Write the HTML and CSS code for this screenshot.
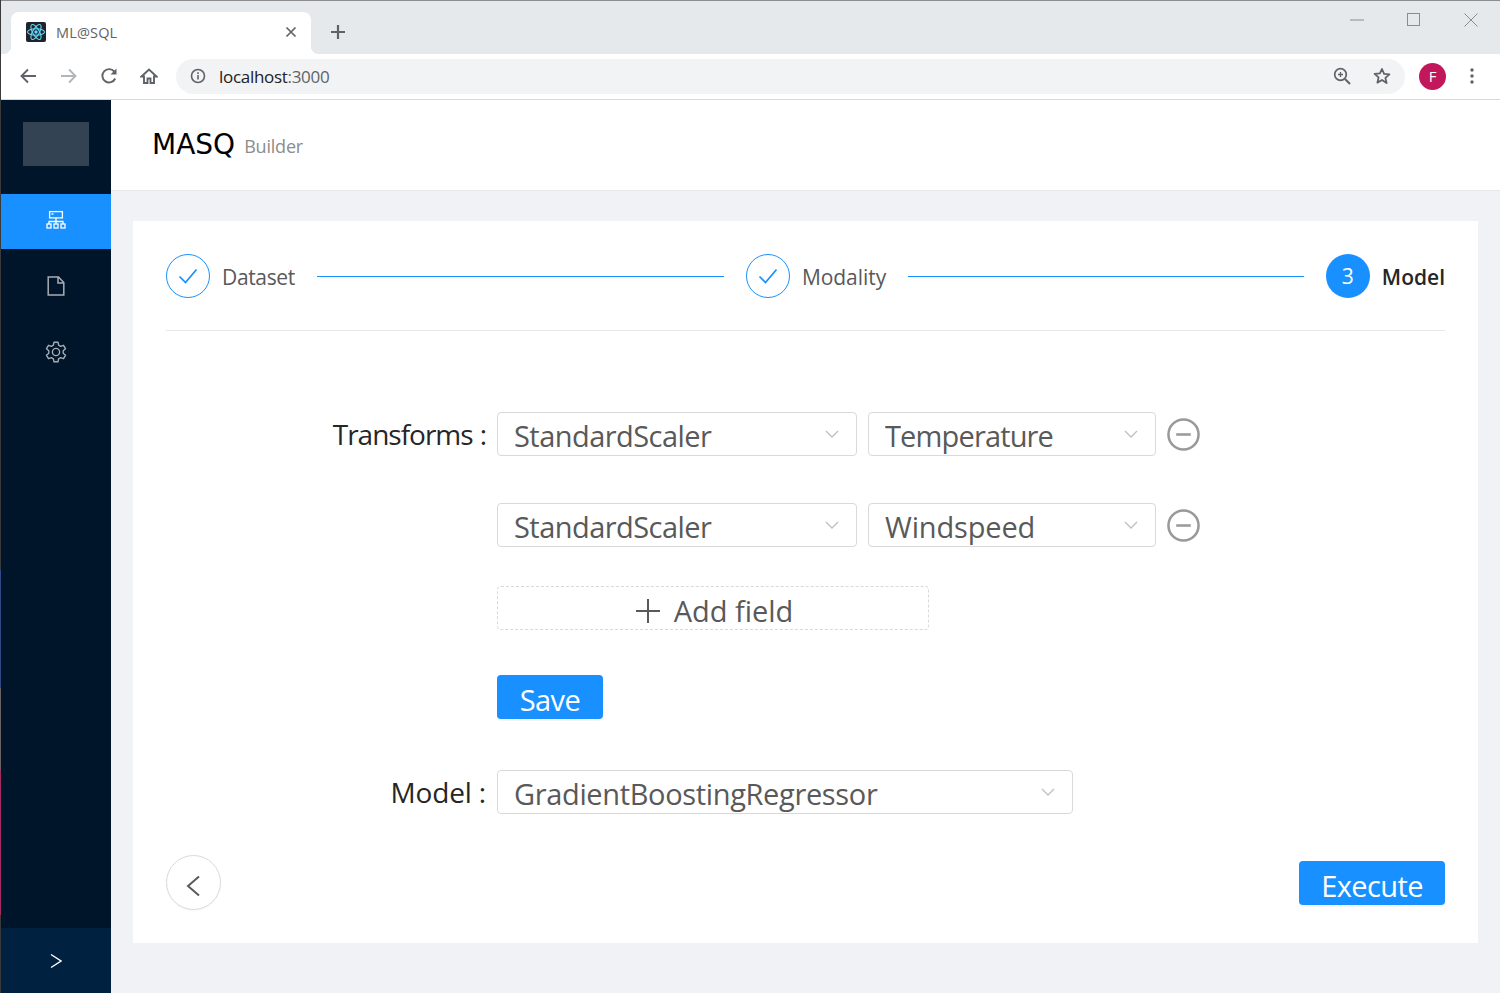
FILE: index.html
```html
<!DOCTYPE html>
<html lang="en">
<head>
<meta charset="utf-8">
<title>ML@SQL</title>
<link rel="stylesheet" href="styles.css">
</head>
<body>
<div class="window">
  <div class="tabstrip">
    <div class="tab">
      <svg class="favicon" viewBox="0 0 20 20"><rect width="20" height="20" rx="2" fill="#20232a"/><g fill="none" stroke="#61dafb" stroke-width="1.1"><ellipse cx="10" cy="10" rx="8.5" ry="3.3"/><ellipse cx="10" cy="10" rx="8.5" ry="3.3" transform="rotate(60 10 10)"/><ellipse cx="10" cy="10" rx="8.5" ry="3.3" transform="rotate(120 10 10)"/></g><circle cx="10" cy="10" r="1.7" fill="#61dafb"/></svg>
      <span class="tab-title">ML@SQL</span>
      <svg class="tab-close" viewBox="0 0 12 12"><path d="M1.5 1.5l9 9M10.5 1.5l-9 9" stroke="#5f6368" stroke-width="1.7" fill="none"/></svg>
    </div>
    <svg class="new-tab" viewBox="0 0 16 16"><path d="M8 1v14M1 8h14" stroke="#5f6368" stroke-width="2.2" fill="none"/></svg>
    <div class="win-controls">
      <svg viewBox="0 0 14 14"><path d="M0 7h14" stroke="#8a8d90" fill="none"/></svg>
      <svg viewBox="0 0 14 14"><rect x=".5" y=".5" width="12" height="12" stroke="#8a8d90" fill="none"/></svg>
      <svg viewBox="0 0 14 14"><path d="M.5.5l13 13M13.5.5l-13 13" stroke="#8a8d90" fill="none"/></svg>
    </div>
  </div>
  <div class="toolbar">
    <svg class="tool back-tool" viewBox="0 0 18 18"><path d="M17 9H2.5M9 2.5L2.5 9 9 15.5" stroke="#5f6368" stroke-width="1.9" fill="none"/></svg>
    <svg class="tool" viewBox="0 0 18 18"><path d="M1 9h14.5M9 2.5L15.5 9 9 15.5" stroke="#b3b6b9" stroke-width="1.9" fill="none"/></svg>
    <svg class="tool" viewBox="0 0 18 18"><path d="M15.2 11.5A6.7 6.7 0 1 1 14.3 4.6" stroke="#5f6368" stroke-width="1.9" fill="none"/><path d="M16.5 1.5v6h-6z" fill="#5f6368"/></svg>
    <svg class="tool" viewBox="0 0 18 18"><path d="M1.5 9.5L9 2.5l7.500 7H14V16H10.500v-4.500h-3V16H4V9.500z" stroke="#5f6368" stroke-width="1.9" fill="none"/></svg>
    <div class="omnibox">
      <svg class="info" viewBox="0 0 16 16"><circle cx="8" cy="8" r="6.5" stroke="#5f6368" stroke-width="1.6" fill="none"/><path d="M8 7v4.500M8 4.300v1.600" stroke="#5f6368" stroke-width="1.6"/></svg>
      <span class="url">localhost<span class="url-port">:3000</span></span>
      <svg class="zoom-ic" viewBox="0 0 18 18"><circle cx="7.5" cy="7.5" r="5.8" stroke="#5f6368" stroke-width="1.7" fill="none"/><path d="M12 12l5 5" stroke="#5f6368" stroke-width="2" fill="none"/><path d="M7.500 5v5M5 7.500h5" stroke="#5f6368" stroke-width="1.3"/></svg>
      <svg class="star" viewBox="0 0 18 18"><path d="M9 2l2.100 4.900 5.300.5-4 3.500 1.200 5.200L9 13l-4.600 2.600 1.200-5.200-4-3.500 5.300-.5z" stroke="#5f6368" stroke-width="1.8" fill="none" stroke-linejoin="round"/></svg>
    </div>
    <div class="avatar">F</div>
    <svg class="kebab" viewBox="0 0 4 16"><circle cx="2" cy="2" r="1.7" fill="#5f6368"/><circle cx="2" cy="8" r="1.7" fill="#5f6368"/><circle cx="2" cy="14" r="1.7" fill="#5f6368"/></svg>
  </div>
  <div class="app">
    <aside class="sider">
      <div class="logo"></div>
      <nav class="menu">
        <div class="menu-item active">
          <svg class="menu-icon" viewBox="0 0 20 20" fill="none" stroke="#fff" stroke-width="1.3"><rect x="3.6" y="1.6" width="12.8" height="6.3"/><path d="M10 8v3.500M3 14v-2.500h14V14M10 11.500V14"/><rect x="1" y="14" width="4" height="4"/><rect x="8" y="14" width="4" height="4"/><rect x="15" y="14" width="4" height="4"/><path d="M5.500 4h2" stroke-width="1.4"/></svg>
        </div>
        <div class="menu-item">
          <svg class="menu-icon" viewBox="0 0 20 20" fill="none" stroke="#a6adb4" stroke-width="1.5"><path d="M2.200 1H12.500L17.800 6.500V19H2.200zM12 1v6h5.800"/></svg>
        </div>
        <div class="menu-item">
          <svg class="menu-icon gear" viewBox="0 0 22 22" fill="none" stroke="#a6adb4" stroke-width="1.4" stroke-linejoin="round"><path d="M9 1.200h4l.6 3 2 1.100 2.900-1 2 3.400-2.300 2 0 2.600 2.300 2-2 3.400-2.900-1-2 1.100-.6 3H9l-.6-3-2-1.100-2.900 1-2-3.400 2.300-2 0-2.600-2.300-2 2-3.400 2.900 1 2-1.100z"/><circle cx="11" cy="11" r="3.600"/></svg>
        </div>
      </nav>
      <div class="trigger">
        <svg class="trigger-icon" viewBox="0 0 12 16"><path d="M1 1.500L11 8 1 14.500" stroke="#fff" stroke-width="1.4" fill="none"/></svg>
      </div>
    </aside>
    <main class="main">
      <header class="page-header">
        <span class="brand">MASQ</span>
        <span class="brand-sub">Builder</span>
      </header>
      <section class="content">
        <div class="card">
          <div class="steps">
            <div class="step grow">
              <span class="step-icon done"><svg viewBox="0 0 20 16"><path d="M1.500 8.500L7.500 14.500 18.500 1.500" stroke="#1890ff" stroke-width="1.7" fill="none"/></svg></span>
              <span class="step-title t-data">Dataset</span>
              <div class="step-line"></div>
            </div>
            <div class="step grow">
              <span class="step-icon done"><svg viewBox="0 0 20 16"><path d="M1.500 8.500L7.500 14.500 18.500 1.500" stroke="#1890ff" stroke-width="1.7" fill="none"/></svg></span>
              <span class="step-title">Modality</span>
              <div class="step-line"></div>
            </div>
            <div class="step">
              <span class="step-icon current">3</span>
              <span class="step-title active">Model</span>
            </div>
          </div>
          <form class="form">
            <div class="form-row transforms">
              <label class="form-label tight">Transforms</label>
              <div class="select wide"><span>StandardScaler</span><svg class="caret" viewBox="0 0 14 8"><path d="M1 1l6 6 6-6" stroke="#bfbfbf" stroke-width="1.3" fill="none"/></svg></div>
              <div class="select narrow"><span class="t-temp">Temperature</span><svg class="caret" viewBox="0 0 14 8"><path d="M1 1l6 6 6-6" stroke="#bfbfbf" stroke-width="1.3" fill="none"/></svg></div>
              <svg class="minus" viewBox="0 0 34 34"><circle cx="17" cy="17" r="15.5" stroke="#999" stroke-width="2.6" fill="none"/><path d="M9.500 17h15" stroke="#999" stroke-width="2.6"/></svg>
            </div>
            <div class="form-row second-row">
              <div class="form-label"></div>
              <div class="select wide"><span>StandardScaler</span><svg class="caret" viewBox="0 0 14 8"><path d="M1 1l6 6 6-6" stroke="#bfbfbf" stroke-width="1.3" fill="none"/></svg></div>
              <div class="select narrow"><span class="t-wind">Windspeed</span><svg class="caret" viewBox="0 0 14 8"><path d="M1 1l6 6 6-6" stroke="#bfbfbf" stroke-width="1.3" fill="none"/></svg></div>
              <svg class="minus" viewBox="0 0 34 34"><circle cx="17" cy="17" r="15.5" stroke="#999" stroke-width="2.6" fill="none"/><path d="M9.500 17h15" stroke="#999" stroke-width="2.6"/></svg>
            </div>
            <div class="form-row add-row">
              <div class="form-label"></div>
              <button type="button" class="add-field"><svg class="plus" viewBox="0 0 24 24"><path d="M12 0v24M0 12h24" stroke="#595959" stroke-width="2" fill="none"/></svg><span>Add field</span></button>
            </div>
            <div class="form-row save-row">
              <div class="form-label"></div>
              <button type="button" class="btn save">Save</button>
            </div>
            <div class="form-row model-row">
              <label class="form-label">Model</label>
              <div class="select model"><span class="t-model">GradientBoostingRegressor</span><svg class="caret" viewBox="0 0 14 8"><path d="M1 1l6 6 6-6" stroke="#bfbfbf" stroke-width="1.3" fill="none"/></svg></div>
            </div>
          </form>
          <div class="card-footer">
            <button type="button" class="back"><svg viewBox="0 0 14 22"><path d="M13 1.500L2 11l11 9.500" stroke="#595959" stroke-width="2" fill="none"/></svg></button>
            <button type="button" class="btn execute">Execute</button>
          </div>
        </div>
      </section>
    </main>
  </div>
</div>
</body>
</html>
```
FILE: styles.css
```css
* { box-sizing: border-box; }
html, body { margin: 0; height: 100%; overflow: hidden; }
body { font-family: "Open Sans", "Noto Sans", sans-serif; background: #fff; }
.window { width: 1500px; height: 993px; display: flex; flex-direction: column; padding-left: 1px; background: linear-gradient(#3a3a3a 0 570px, #2f4a86 570px 688px, #6a625f 688px 770px, #a52a63 770px 915px, #3a3a3a 915px); }

.tabstrip { height: 54px; flex: none; background: #e6e9ec; border-top: 1px solid #8b8d8f; display: flex; position: relative; padding: 11px 0 0 10px; }
.tab { width: 300px; height: 42px; background: #fff; border-radius: 8px 8px 0 0; display: flex; align-items: center; padding: 0 14px 2px 15px; position: relative; }
.tab::before, .tab::after { content: ""; position: absolute; bottom: 0; width: 8px; height: 8px; }
.tab::before { left: -8px; background: radial-gradient(circle at 0 0, #e6e9ec 8px, #fff 8.5px); }
.tab::after { right: -8px; background: radial-gradient(circle at 100% 0, #e6e9ec 8px, #fff 8.5px); }
.favicon { width: 20px; height: 20px; flex: none; }
.tab-title { margin-left: 10px; font-size: 14.5px; color: #5f6368; flex: 1; letter-spacing: .15px; }
.tab-close { width: 12px; height: 12px; }
.new-tab { width: 16px; height: 16px; margin: 12px 0 0 19px; }
.win-controls { position: absolute; top: 12px; right: 22px; display: flex; gap: 43px; }
.win-controls svg { width: 14px; height: 14px; }

.toolbar { height: 46px; flex: none; background: #fff; border-bottom: 1px solid #d5d7da; display: flex; align-items: center; padding: 0 0 1px 18px; }
.tool { width: 18px; height: 18px; margin-right: 22px; flex: none; }
.back-tool { margin-right: 23px; }
.omnibox { width: 1229px; height: 35px; background: #f1f3f4; border-radius: 18px; margin-left: -4px; display: flex; align-items: center; padding: 0 14px; }
.info { width: 16px; height: 16px; }
.url { margin-left: 13px; font-size: 17px; color: #202124; flex: 1; letter-spacing: -.3px; }
.url-port { color: #5f6368; }
.zoom-ic { width: 18px; height: 18px; margin-right: 22px; }
.star { width: 18px; height: 18px; }
.avatar { width: 27px; height: 27px; border-radius: 50%; background: #c2185b; color: #fff; font-size: 15px; display: flex; align-items: center; justify-content: center; margin-left: 14px; }
.kebab { width: 4px; height: 16px; margin-left: 24px; }

.app { flex: 1; display: flex; min-height: 0; background: #fff; }
.sider { width: 110px; flex: none; background: #001529; display: flex; flex-direction: column; }
.logo { height: 44px; width: 66px; margin: 22px 22px 28px; background: rgba(255,255,255,.2); flex: none; }
.menu { flex: 1; display: flex; flex-direction: column; gap: 11px; }
.menu-item { height: 55px; display: flex; align-items: center; justify-content: center; padding-bottom: 4px; }
.menu-item.active { background: #1890ff; }
.menu-icon { width: 20px; height: 20px; }
.gear { width: 22px; height: 22px; }
.trigger { height: 65px; background: #002140; display: flex; align-items: center; justify-content: center; flex: none; }
.trigger-icon { width: 12px; height: 16px; }

.main { flex: 1; display: flex; flex-direction: column; background: #f0f2f5; min-width: 0; }
.page-header { height: 91px; flex: none; background: #fff; border-bottom: 1px solid #e8e8e8; display: flex; align-items: baseline; padding: 28px 0 0 41px; }
.brand { font: 28px "DejaVu Sans", sans-serif; color: #000; }
.brand-sub { font-size: 18px; color: #8c8c8c; margin-left: 9px; letter-spacing: -.2px; position: relative; top: -1px; }
.content { flex: 1; padding: 30px 22px 50px; }
.card { background: #fff; height: 722px; padding: 33px 33px 0; display: flex; flex-direction: column; }

.steps { display: flex; align-items: center; height: 44px; flex: none; }
.step { display: flex; align-items: center; flex: none; }
.step.grow { flex: 1 1 0; margin-right: 22px; }
.step-icon { width: 44px; height: 44px; border-radius: 50%; display: flex; align-items: center; justify-content: center; flex: none; font-size: 21px; }
.step-icon.done { border: 1px solid #1890ff; }
.step-icon.done svg { width: 20px; height: 16px; }
.step-icon.current { background: #1890ff; color: #fff; }
.step-title { margin-left: 12px; font-size: 21px; color: #595959; letter-spacing: -.05px; position: relative; top: 1px; }
.t-data { letter-spacing: -.35px; }
.step-title.active { color: #262626; font-weight: 600; letter-spacing: 0; }
.step-line { height: 1px; background: #1890ff; flex: 1; margin-left: 22px; }

.form { border-top: 1px solid #e8e8e8; margin-top: 32px; padding-top: 81px; flex: none; display: flex; flex-direction: column; }
.form-row { display: flex; align-items: center; height: 44px; }
.second-row { margin-top: 47px; }
.add-row { margin-top: 39px; }
.save-row { margin-top: 45px; }
.model-row { margin-top: 51px; }
.form-label { width: 331px; flex: none; padding-right: 11px; text-align: right; font-size: 28px; color: #262626; letter-spacing: -.15px; line-height: 44px; }
.form-label.tight { letter-spacing: -1px; }
.form-label:not(:empty)::after { content: ":"; margin-left: 7px; }
.select { height: 44px; border: 1px solid #d9d9d9; border-radius: 4px; display: flex; align-items: center; justify-content: space-between; font-size: 29px; color: #595959; letter-spacing: -.55px; padding: 0 17px 0 16px; flex: none; }
.select span { line-height: 44px; position: relative; top: 2px; }
.t-temp { letter-spacing: -.85px; }
.t-wind { letter-spacing: -.15px; }
.t-model { letter-spacing: -.35px; }
.wide { width: 360px; }
.narrow { width: 288px; margin-left: 11px; }
.model { width: 576px; }
.caret { width: 14px; height: 8px; }
.minus { width: 33px; height: 33px; margin-left: 11px; }
.add-field { width: 432px; height: 44px; border: 1px dashed #d9d9d9; border-radius: 4px; background: #fff; font: inherit; font-size: 29px; color: #595959; letter-spacing: -.05px; display: flex; align-items: center; justify-content: center; padding: 0 0 0 3px; }
.add-field span { position: relative; top: 2px; }
.plus { width: 24px; height: 24px; margin: 5px 14px 0 0; }
.btn { height: 44px; border: 0; border-radius: 4px; background: #1890ff; color: #fff; font: inherit; font-size: 29px; letter-spacing: -.6px; padding: 4px 0 0; box-shadow: 0 2px 0 rgba(0,0,0,.035); }
.save { width: 106px; }
.execute { width: 146px; margin-top: 6px; }
.card-footer { display: flex; justify-content: space-between; align-items: flex-start; margin-top: 41px; }
.back { width: 55px; height: 55px; border-radius: 50%; border: 1px solid #d9d9d9; background: #fff; display: flex; align-items: center; justify-content: center; padding: 0 2px 0 0; box-shadow: 0 2px 0 rgba(0,0,0,.015); }
.back svg { width: 14px; height: 22px; position: relative; top: 3px; }
```
